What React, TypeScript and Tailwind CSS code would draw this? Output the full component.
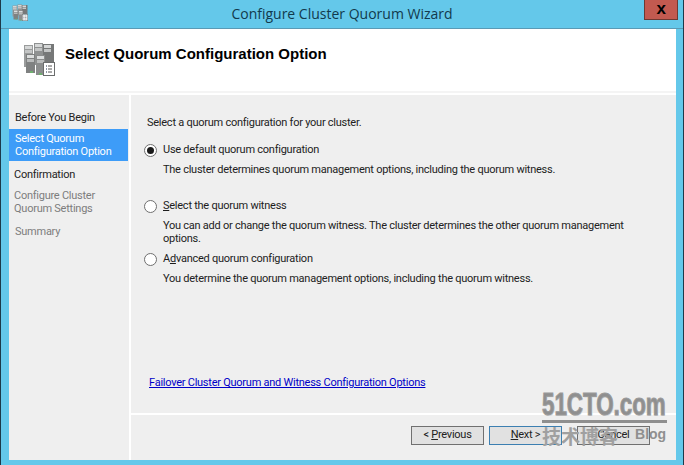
const uiFont = "font-['Roboto','Noto_Sans',sans-serif]";

const ServerIcon = ({ className }: { className: string }) => (
  <svg viewBox="0 0 32 34" className={className}>
    <rect x="1" y="3" width="9" height="22" fill="#9a9c9c" />
    <rect x="2" y="4" width="7" height="3" fill="#d5d7d7" />
    <rect x="2" y="8" width="7" height="3" fill="#c3c5c5" />
    <rect x="11" y="1" width="9" height="22" fill="#8f9191" />
    <rect x="12" y="2" width="7" height="3" fill="#d5d7d7" />
    <rect x="12" y="6" width="7" height="3" fill="#c3c5c5" />
    <rect x="20" y="2" width="11" height="18" fill="#767878" />
    <rect x="21" y="3" width="7" height="3" fill="#d5d7d7" />
    <rect x="21" y="7" width="7" height="3" fill="#c3c5c5" />
    <rect x="3" y="12" width="9" height="19" fill="#7f8181" />
    <rect x="4" y="13" width="7" height="3" fill="#dcdede" />
    <rect x="4" y="17" width="7" height="3" fill="#b9bbbb" />
    <rect x="13" y="13" width="9" height="20" fill="#8b8d8d" />
    <rect x="14" y="14" width="7" height="3" fill="#dcdede" />
    <rect x="14" y="18" width="7" height="3" fill="#b9bbbb" />
    <rect x="7" y="29" width="3" height="2" fill="#6fae6f" />
    <rect x="16" y="31" width="3" height="2" fill="#6fae6f" />
    <rect x="20.5" y="20.5" width="11" height="13" fill="#fff" stroke="#6b6d6d" />
    <path d="M23 24h1M23 27h1M23 30h1" stroke="#1f2f4f" strokeWidth="1.2" />
    <path d="M25 24h4M25 27h4M25 30h4" stroke="#555" />
  </svg>
);

const Radio = ({ checked = false }: { checked?: boolean }) => (
  <span className="flex h-[13px] w-[13px] shrink-0 items-center justify-center rounded-full border border-[#6f6f6f] bg-white">
    {checked && <span className="h-[7px] w-[7px] rounded-full bg-[#1a1a1a]" />}
  </span>
);

const Option = ({ label, children, checked, className }: { label: React.ReactNode; children: React.ReactNode; checked?: boolean; className: string }) => (
  <div className={className}>
    <div className="flex items-center gap-[6px] pl-[13px] leading-[16px] text-[#1c1c1c]">
      <Radio checked={checked} />
      <span>{label}</span>
    </div>
    <p className="mt-[5px] w-[512px] pl-[32px] leading-[13px] text-[#222]">{children}</p>
  </div>
);

const Button = ({ children, className }: { children: React.ReactNode; className: string }) => (
  <button className={`flex h-[19px] w-[73px] items-center justify-center bg-[#e1e1e1] text-[#222] ${className}`}>{children}</button>
);

export default function App() {
  return (
    <div className={`relative flex h-[465px] w-[684px] flex-col overflow-hidden border-x border-x-[#1c3a4a] bg-[#64c8ea] ${uiFont} text-[11px] tracking-[-0.25px]`}>
      <header className="relative flex h-[29px] shrink-0 items-center justify-center border-b border-b-[#5a9ab5] pb-[1px]">
        <ServerIcon className="absolute left-[11px] top-[4px] h-[17px] w-[16px]" />
        <span className="font-['Open_Sans',sans-serif] text-[14px] tracking-normal text-[#123a4d]">Configure Cluster Quorum Wizard</span>
        <button className="absolute right-[5px] top-0 flex h-[20px] w-[34px] items-center justify-center border border-t-0 border-[#6d3a33] bg-[#c25a50] pb-[3px] font-['Liberation_Sans',sans-serif] text-[17px] font-bold leading-none text-black">x</button>
      </header>

      <main className="ml-[8px] mr-[7px] mb-[5px] flex min-h-0 flex-1 flex-col bg-white">
        <div className="flex h-[64px] shrink-0 items-center gap-[10px] border-b-2 border-b-[#f4f4f4] pb-[6px] pl-[14px]">
          <ServerIcon className="mt-[4px] h-[34px] w-[32px]" />
          <h1 className="mb-[6px] font-['Liberation_Sans',sans-serif] text-[15px] font-bold tracking-normal text-black">Select Quorum Configuration Option</h1>
        </div>

        <div className="flex min-h-0 flex-1 gap-[2px] pt-[2px]">
          <nav className="flex w-[120px] shrink-0 flex-col bg-[#efefef] pr-[1px] pt-[16px] leading-[13px] text-[#222]">
            <div className="pl-[6px]">Before You Begin</div>
            <div className="mt-[5px] bg-[#3d9cf8] py-[3px] pl-[6px] text-white">
              Select Quorum<br />Configuration Option
            </div>
            <div className="mt-[7px] pl-[5px]">Confirmation</div>
            <div className="mt-[8px] pl-[5px] text-[#7d7d7d]">
              Configure Cluster<br />Quorum Settings
            </div>
            <div className="mt-[10px] pl-[6px] text-[#7d7d7d]">Summary</div>
          </nav>

          <section className="flex min-w-0 flex-1 flex-col bg-[#efefef]">
            <div className="flex-1 pt-[21px]">
              <p className="pl-[16px] leading-[14px] text-[#222]">Select a quorum configuration for your cluster.</p>
              <Option checked className="mt-[12px]" label={<>Use default quorum configuration</>}>
                The cluster determines quorum management options, including the quorum witness.
              </Option>
              <Option className="mt-[22px]" label={<><u>S</u>elect the quorum witness</>}>
                You can add or change the quorum witness. The cluster determines the other quorum management options.
              </Option>
              <Option className="mt-[6px]" label={<>A<u>d</u>vanced quorum configuration</>}>
                You determine the quorum management options, including the quorum witness.
              </Option>
              <a className="ml-[18px] mt-[91px] block leading-[14px] text-[#0000c8] underline">Failover Cluster Quorum and Witness Configuration Options</a>
            </div>
            <footer className="flex h-[47px] shrink-0 border-t-2 border-t-white pl-[280px] pt-[11px]">
              <Button className="border border-[#707070]">&lt;&nbsp;<u>P</u>revious</Button>
              <Button className="ml-[5px] border border-[#3c7fb1]"><u>N</u>ext &gt;</Button>
              <Button className="ml-[15px] border border-[#707070]">Cancel</Button>
            </footer>
          </section>
        </div>
      </main>

      <div className="absolute left-[541px] top-[389px] w-[125px] tracking-normal text-[#8f8f8f]">
        <div className="h-[31px] w-[172px] origin-left scale-x-[0.72] font-['Liberation_Sans',sans-serif] text-[31px] font-bold leading-[31px] [-webkit-text-stroke:1px_#9a9a9a] [text-shadow:1px_1px_0_#d8d8d8]">51CTO.com</div>
        <div className="h-[3px] bg-[#8f8f8f]" />
        <div className="flex items-start pt-[1px]">
          <span className="font-['Noto_Sans_CJK_SC',sans-serif] text-[19px] font-bold leading-[24px] text-[#a0a0a0]">技术博客</span>
          <span className="ml-[17px] mt-[3px] font-['Liberation_Sans',sans-serif] text-[14px] font-bold leading-[14px]">Blog</span>
        </div>
      </div>
    </div>
  );
}
